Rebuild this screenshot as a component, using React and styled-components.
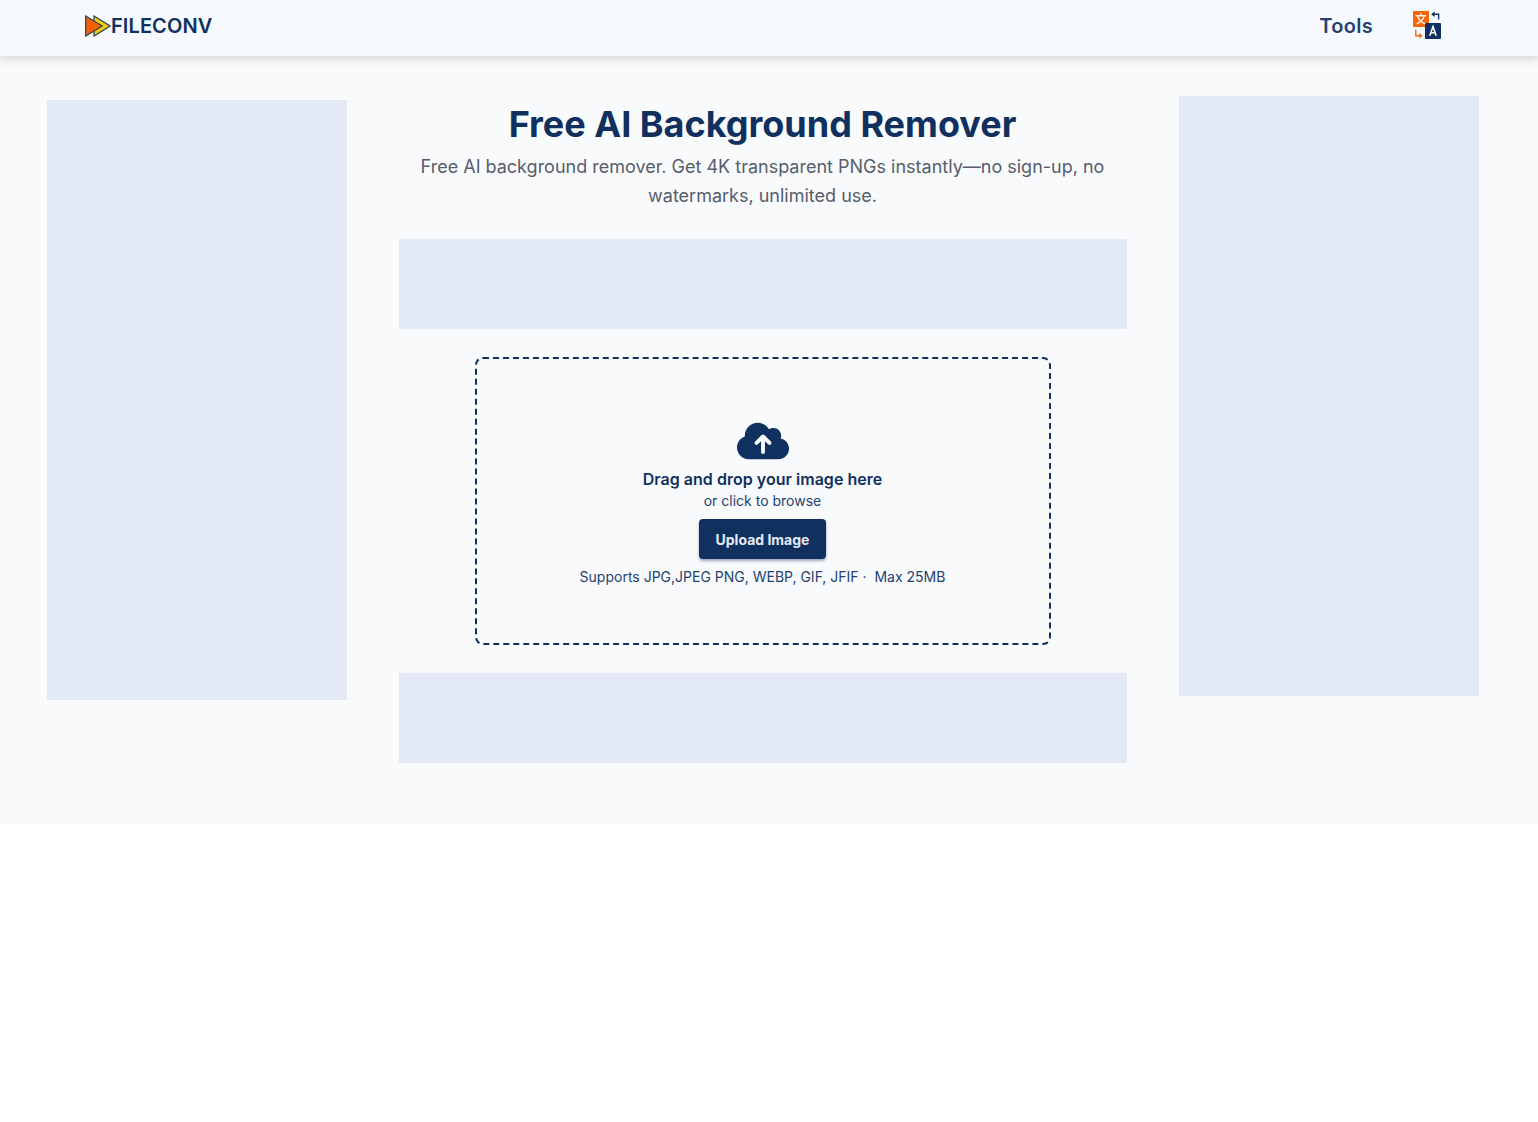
import React from "react";
import styled, { createGlobalStyle } from "styled-components";
import { FaCloudArrowUp } from "react-icons/fa6";

const GlobalStyle = createGlobalStyle`
  * {
    box-sizing: border-box;
  }

  body {
    margin: 0;
    background: #fff;
    color: #10305f;
    font-family: Inter, "Liberation Sans", sans-serif;
  }

  h1, p {
    margin: 0;
  }
`;

const Header = styled.header`
  position: relative;
  height: 56px;
  padding: 0 96px 4px 85px;
  display: flex;
  align-items: center;
  justify-content: space-between;
  background: #f6faff;
  box-shadow: 0 0 10px 2px rgba(0, 0, 0, 0.18);
`;

const Brand = styled.a`
  display: flex;
  align-items: center;
  color: inherit;
  font-size: 20px;
  font-weight: 600;
  line-height: 24px;
  letter-spacing: 0.1px;
  text-decoration: none;
`;

const Nav = styled.nav`
  display: flex;
  align-items: center;
  gap: 40px;
`;

const NavLink = styled.a`
  color: #24426f;
  font-size: 20px;
  font-weight: 600;
  line-height: 24px;
  letter-spacing: 0.3px;
  text-decoration: none;
`;

const Page = styled.main`
  height: 768px;
  padding: 40px 59px 0 47px;
  display: flex;
  align-items: flex-start;
  justify-content: space-between;
  background: #f9fafc;
`;

const SideBanner = styled.aside`
  width: 300px;
  height: 600px;
  margin-top: ${(props) => props.$offset || 0}px;
  background: #e3e9f5;
`;

const Content = styled.section`
  width: 728px;
  padding-top: 6px;
  display: flex;
  flex-direction: column;
  align-items: center;
`;

const Title = styled.h1`
  padding-right: 1px;
  font-size: 36px;
  font-weight: 700;
  line-height: 44px;
  white-space: nowrap;
`;

const Subtitle = styled.p`
  margin-top: 6px;
  padding-right: 1px;
  color: #565d6b;
  font-size: 18px;
  font-weight: 400;
  line-height: 29px;
  text-align: center;
`;

const Banner = styled.div`
  width: 728px;
  height: 90px;
  margin-top: ${(props) => props.$top}px;
  background: #e3e9f5;
`;

const DropZone = styled.div`
  width: 576px;
  height: 288px;
  margin-top: 28px;
  padding: 61px 1px 0 0;
  display: flex;
  flex-direction: column;
  align-items: center;
  border: 2px dashed #10305f;
  border-radius: 8px;
`;

const CloudIcon = styled(FaCloudArrowUp)`
  width: 52px;
  height: 42px;
  margin-left: 1px;
`;

const DropTitle = styled.p`
  margin-top: 5px;
  font-size: 16px;
  font-weight: 600;
  line-height: 24px;
  letter-spacing: 0.03px;
`;

const DropText = styled.p`
  color: #24426f;
  font-size: 14px;
  font-weight: 400;
  line-height: 20px;
  white-space: pre;
`;

const UploadButton = styled.button`
  width: 127px;
  height: 40px;
  margin: 8px 0;
  padding: 0;
  border: 0;
  border-radius: 4px;
  background: #10305f;
  color: #e3e9f5;
  font-family: inherit;
  font-size: 14px;
  font-weight: 700;
  box-shadow: 0 2px 3px rgba(16, 48, 95, 0.4);
`;

function LogoIcon() {
  return (
    <svg width="26" height="22" viewBox="0 0 26 22">
      <g stroke="#33475b" strokeWidth="1.3">
        <path d="M9 1 25 11 9 21Z" fill="#f8cb0c" />
        <path d="M.7 1 17.2 11 .7 21Z" fill="#f56200" />
      </g>
    </svg>
  );
}

function TranslateIcon() {
  return (
    <svg width="29" height="31" viewBox="0.4 0.2 29 31" fill="none">
      <rect x="0.4" y="0.2" width="16" height="16" rx="1" fill="#f76707" />
      <rect x="12.4" y="12.2" width="16" height="16" rx="1" fill="#10305f" />
      <g stroke="#fdf0e6" strokeWidth="1.4">
        <path d="M3 5h10.500M8.200 2.500V5M5 5.400C6 9.500 8.500 11.500 12.500 13M11.500 5.400C10.500 9.500 8 11.500 4 13" />
      </g>
      <path
        d="M17.200 25 20.400 15.800 23.600 25M18.200 22h4.400"
        stroke="#f6faff"
        strokeWidth="1.600"
      />
      <path d="M26 8.700V3.500H21" stroke="#10305f" strokeWidth="1.400" />
      <path d="M18.500 3.500 22 .8v5.400Z" fill="#10305f" />
      <path d="M3.200 19v6h4.500" stroke="#f76707" strokeWidth="1.400" />
      <path d="M10 25 6.800 22.200v5.600Z" fill="#f76707" />
    </svg>
  );
}

export default function App() {
  return (
    <>
      <GlobalStyle />
      <Header>
        <Brand href="#">
          <LogoIcon />
          FILECONV
        </Brand>
        <Nav>
          <NavLink href="#">Tools</NavLink>
          <TranslateIcon />
        </Nav>
      </Header>
      <Page>
        <SideBanner $offset={4} />
        <Content>
          <Title>Free AI Background Remover</Title>
          <Subtitle>
            Free AI background remover. Get 4K transparent PNGs instantly—no
            sign-up, no watermarks, unlimited use.
          </Subtitle>
          <Banner $top={29} />
          <DropZone>
            <CloudIcon />
            <DropTitle>Drag and drop your image here</DropTitle>
            <DropText>or click to browse</DropText>
            <UploadButton>Upload Image</UploadButton>
            <DropText>{"Supports JPG,JPEG PNG, WEBP, GIF, JFIF ·  Max 25MB"}</DropText>
          </DropZone>
          <Banner $top={28} />
        </Content>
        <SideBanner />
      </Page>
    </>
  );
}
